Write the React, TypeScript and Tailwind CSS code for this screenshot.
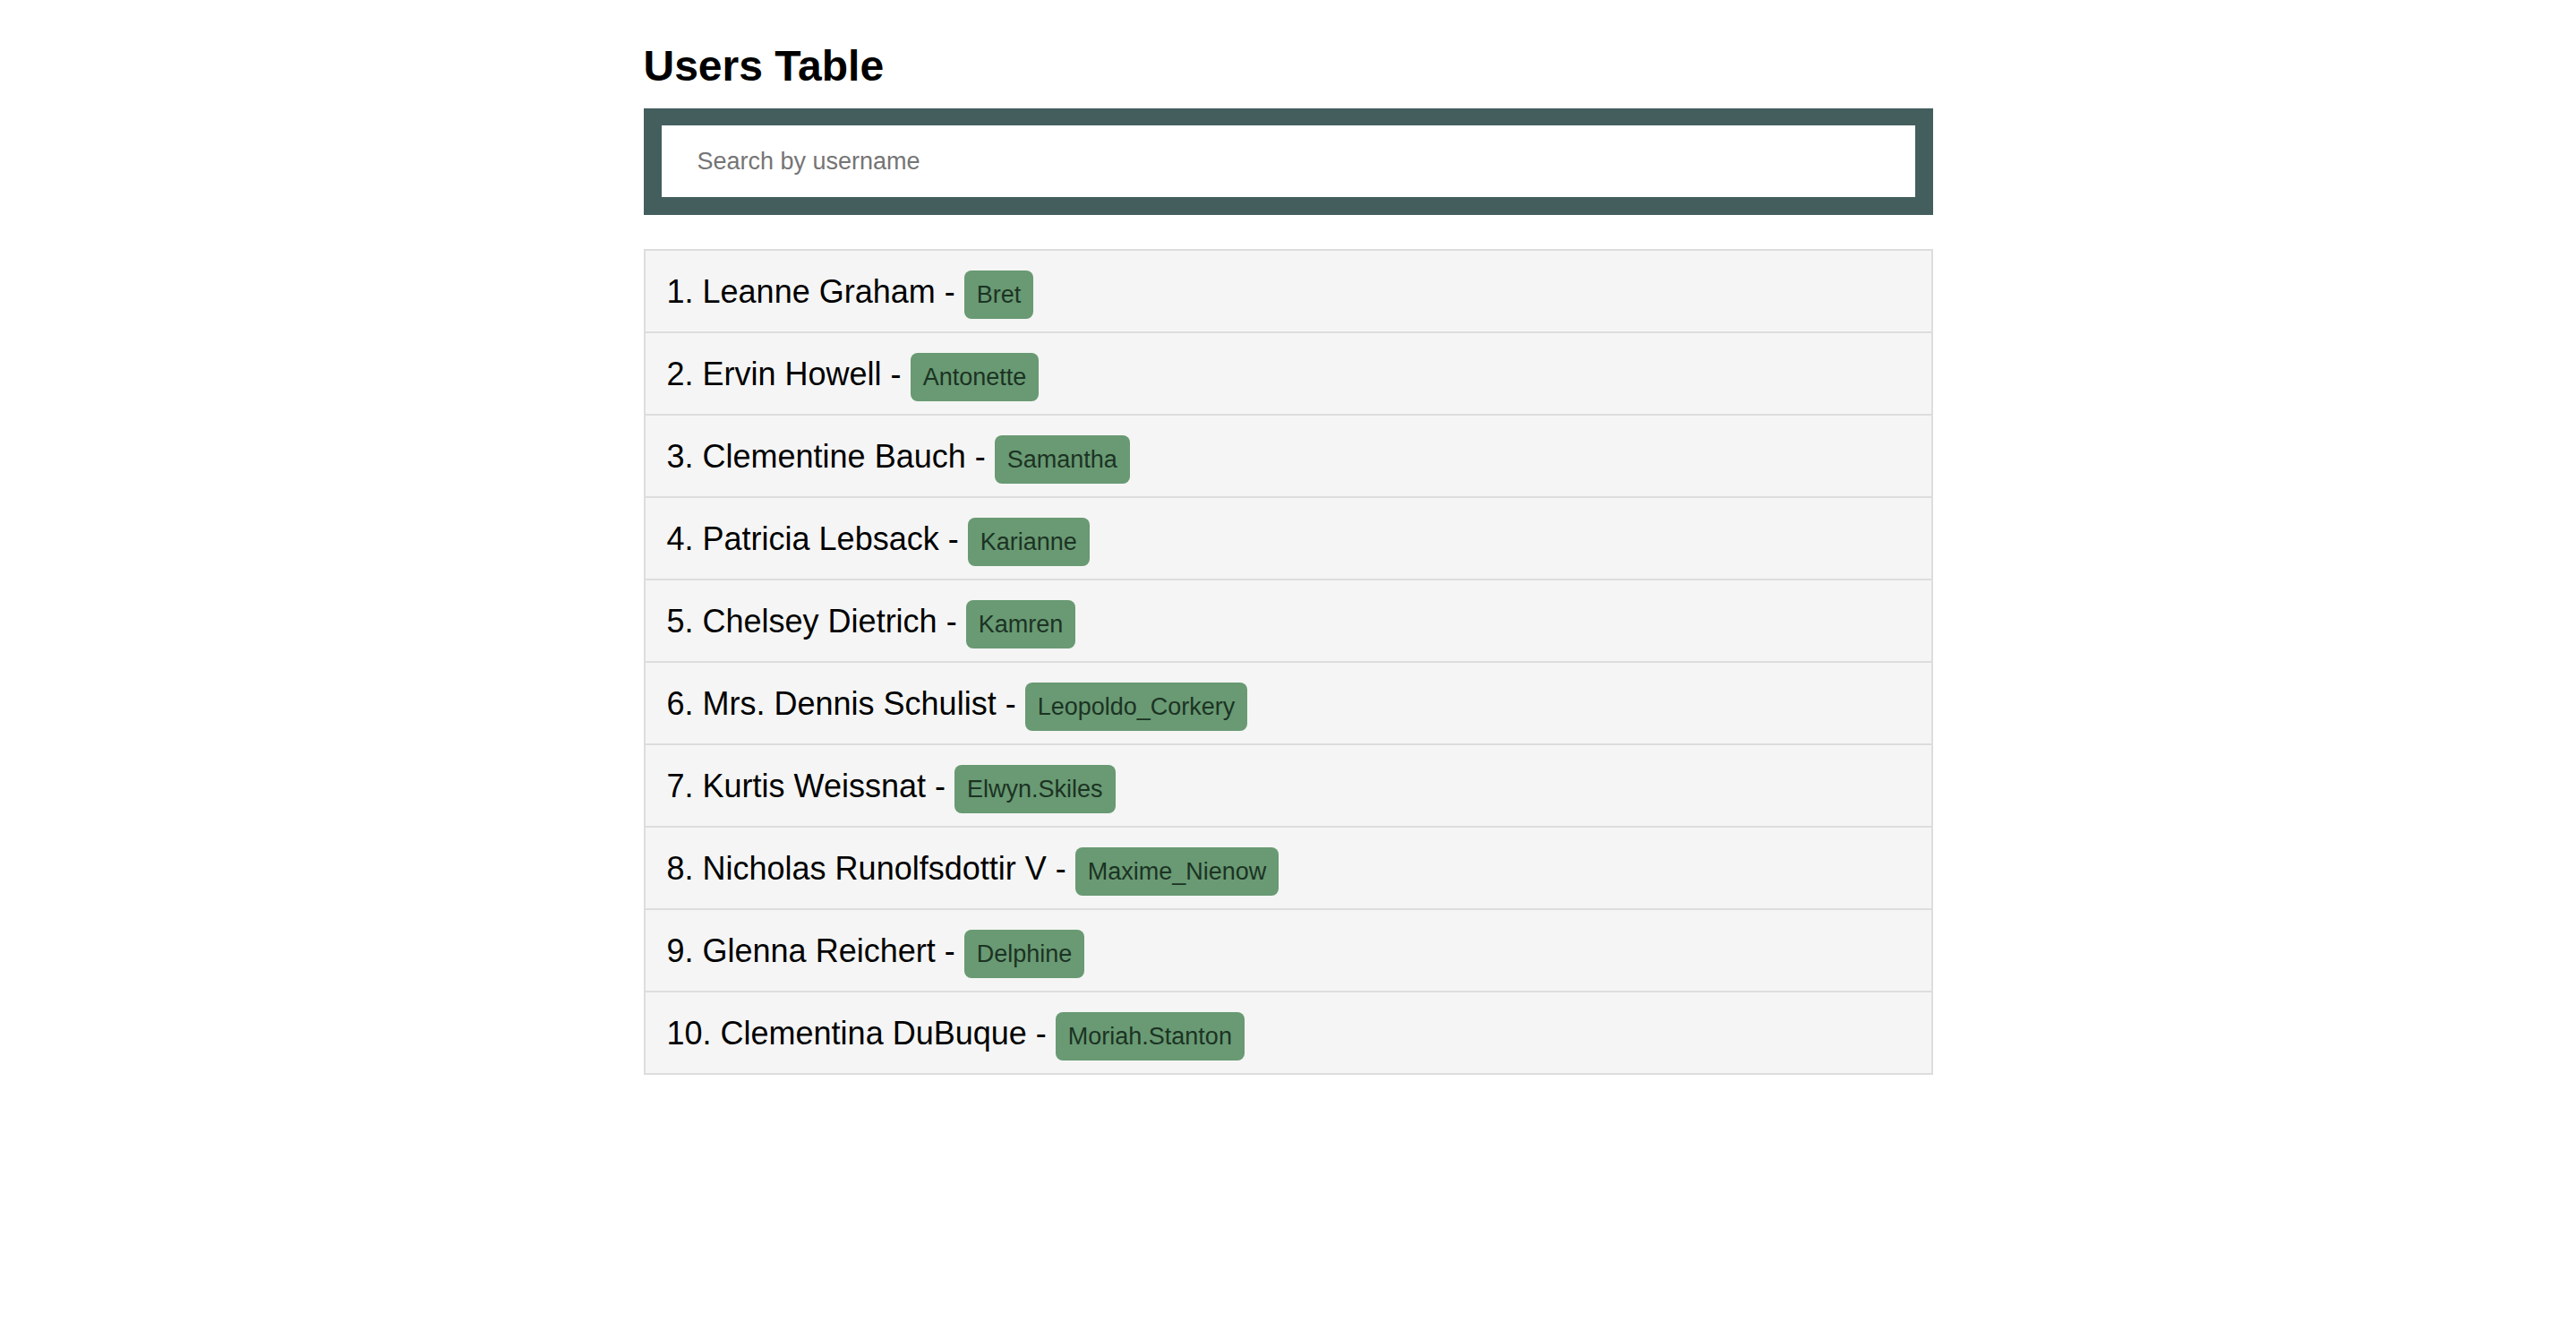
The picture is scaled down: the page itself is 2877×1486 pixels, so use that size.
const users = [
  { name: "Leanne Graham", username: "Bret" },
  { name: "Ervin Howell", username: "Antonette" },
  { name: "Clementine Bauch", username: "Samantha" },
  { name: "Patricia Lebsack", username: "Karianne" },
  { name: "Chelsey Dietrich", username: "Kamren" },
  { name: "Mrs. Dennis Schulist", username: "Leopoldo_Corkery" },
  { name: "Kurtis Weissnat", username: "Elwyn.Skiles" },
  { name: "Nicholas Runolfsdottir V", username: "Maxime_Nienow" },
  { name: "Glenna Reichert", username: "Delphine" },
  { name: "Clementina DuBuque", username: "Moriah.Stanton" },
];

const App = () => {
  return (
    <div className="min-h-screen bg-white font-['Liberation_Sans',Arial,sans-serif] text-black">
      <div className="mx-auto w-[1440px] pt-[46px]">
        <h1 className="text-[48px] font-bold leading-[55px]">Users Table</h1>

        {/* Search */}
        <div className="mt-[20px] bg-[#445e5e] p-[20px] pt-[19px]">
          <input
            type="text"
            placeholder="Search by username"
            className="block h-[80px] w-full bg-white px-[40px] text-[27px] text-black outline-none placeholder:text-[#757575]"
          />
        </div>

        {/* List */}
        <ul className="mt-[38px] border-x-2 border-t-2 border-[#dddddd]">
          {users.map((user, i) => (
            <li
              key={user.username}
              className="h-[92px] border-b-2 border-[#dddddd] bg-[#f5f5f5] px-[24px] pt-[22px] text-[36px] leading-[41px]"
            >
              {i + 1}. {user.name} -{" "}
              <span className="inline-block rounded-[8px] bg-[#699a73] px-[14px] pb-[11px] pt-[12px] text-[27px] leading-[31px] text-[#1c3324]">
                {user.username}
              </span>
            </li>
          ))}
        </ul>
      </div>
    </div>
  );
};

export default App;
